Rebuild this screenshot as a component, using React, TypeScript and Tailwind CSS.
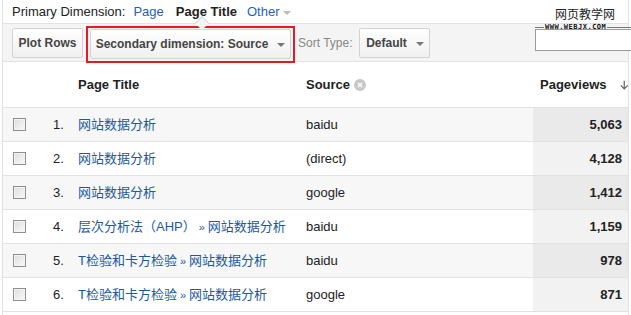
import React from "react";

const rows = [
  { n: "1.", title: [{ t: "网站数据分析" }], src: "baidu", pv: "5,063" },
  { n: "2.", title: [{ t: "网站数据分析" }], src: "(direct)", pv: "4,128" },
  { n: "3.", title: [{ t: "网站数据分析" }], src: "google", pv: "1,412" },
  { n: "4.", title: [{ t: "层次分析法（AHP）" }, { t: "网站数据分析", sep: true }], src: "baidu", pv: "1,159" },
  { n: "5.", title: [{ t: "T检验和卡方检验" }, { t: "网站数据分析", sep: true }], src: "baidu", pv: "978" },
  { n: "6.", title: [{ t: "T检验和卡方检验" }, { t: "网站数据分析", sep: true }], src: "google", pv: "871" },
];

const font = { fontFamily: '"Liberation Sans", Arial, "Noto Sans CJK SC", sans-serif' };

function Caret() {
  return <span className="inline-block w-0 h-0 border-l-[4px] border-r-[4px] border-t-[4px] border-l-transparent border-r-transparent border-t-[#777] ml-[9px] mt-[2px]" />;
}

export default function App() {
  return (
    <div className="w-[631px] h-[315px] bg-white overflow-hidden relative text-[13px] text-[#222]" style={font}>
      <div className="ml-[2px] w-[627px] h-full border-l border-r border-[#e2e2e2]">
        {/* primary dimension */}
        <div className="h-[23px] flex items-center pl-[9px] text-[13px] whitespace-nowrap">
          <span className="text-[#222]">Primary Dimension:</span>
          <span className="ml-[8px] text-[#1f5fbf]">Page</span>
          <span className="ml-[12px] text-[#222] font-bold">Page Title</span>
          <span className="ml-[10px] text-[#1f5fbf]">Other</span>
          <span className="inline-block w-0 h-0 border-l-[4px] border-r-[4px] border-t-[4px] border-l-transparent border-r-transparent border-t-[#bbb] ml-[3px] mt-[2px]" />
        </div>
        {/* toolbar */}
        <div className="relative h-[39px] bg-[#f4f4f4] border-t border-b border-[#e2e2e2] flex items-center whitespace-nowrap overflow-visible">
          <div className="absolute left-[194px] top-[-6px] w-[10px] h-[10px] rotate-45 bg-[#f4f4f4] border-l border-t border-[#d8d8d8]" />
          <div className="shrink-0 ml-[9px] h-[30px] w-[71px] flex items-center justify-center rounded-[2px] border border-[#d3d3d3] bg-gradient-to-b from-white to-[#f0f0f0] text-[12px] font-bold text-[#444]">
            Plot Rows
          </div>
          <div className="shrink-0 ml-[3px] mt-[3px] h-[37px] w-[209px] border-2 border-[#e41b23] flex items-center justify-center">
            <div className="h-[30px] w-[201px] flex items-center justify-center rounded-[2px] border border-[#d3d3d3] bg-gradient-to-b from-white to-[#f0f0f0] text-[12px] font-bold text-[#444]">
              Secondary dimension: Source
              <Caret />
            </div>
          </div>
          <span className="shrink-0 ml-[3px] text-[12px] text-[#888]">Sort Type:</span>
          <div className="shrink-0 ml-[7px] h-[30px] w-[71px] flex items-center justify-center rounded-[2px] border border-[#d3d3d3] bg-gradient-to-b from-white to-[#f0f0f0] text-[12px] font-bold text-[#444]">
            Default
            <Caret />
          </div>
          <div className="shrink-0 ml-[105px] mt-[-6px] h-[22px] w-[100px] border border-[#999] bg-white" />
        </div>
        {/* header */}
        <div className="h-[46px] flex items-center text-[13px] font-bold text-[#222] border-b border-[#e2e2e2]">
          <div className="w-[72px]" />
          <div className="w-[228px] pl-[3px]">Page Title</div>
          <div className="w-[230px] pl-[3px] flex items-center">
            Source
            <span className="ml-[4px] w-[12px] h-[12px] rounded-full bg-[#c8c8c8] flex items-center justify-center">
              <svg width="6" height="6" viewBox="0 0 6 6"><path d="M1 1L5 5M5 1L1 5" stroke="#fff" strokeWidth="1.4" /></svg>
            </span>
          </div>
          <div className="w-[95px] flex items-center pl-[7px]">
            Pageviews
            <svg className="ml-[13px]" width="11" height="12" viewBox="0 0 11 12">
              <path d="M5.5 0.5V10.5M1 6.5L5.5 11L10 6.5" stroke="#666" strokeWidth="1.6" fill="none" />
            </svg>
          </div>
        </div>
        {rows.map((r, i) => (
          <div key={i} className={`h-[34px] flex items-stretch border-b border-[#e2e2e2] ${i % 2 === 0 ? "bg-[#f7f7f7]" : "bg-white"}`}>
            <div className="w-[47px] flex items-center pl-[10px]">
              <span className="w-[13px] h-[13px] border border-[#8f8f8f] bg-gradient-to-br from-[#dcdcdc] to-[#fafafa] shadow-[inset_0_0_0_1px_#f4f4f4]" />
            </div>
            <div className="w-[25px] flex items-center pl-[3px] text-[#222]">{r.n}</div>
            <div className="w-[228px] flex items-center pl-[3px] text-[#1a5a9e] whitespace-nowrap">
              {r.title.map((p, j) => (
                <span key={j}>
                  {p.sep && <span className="text-[11px] mx-[3px]">»</span>}
                  {p.t}
                </span>
              ))}
            </div>
            <div className="w-[230px] flex items-center pl-[3px] text-[#222]">{r.src}</div>
            <div className={`w-[95px] flex items-center justify-end pr-[6px] font-bold text-[#222] ${i % 2 === 0 ? "bg-[#eaeaea]" : "bg-[#f2f2f2]"}`}>{r.pv}</div>
          </div>
        ))}
      </div>
      {/* watermark */}
      <div className="absolute left-[555px] top-[7px] text-[12px] leading-[14px] text-[#222] whitespace-nowrap" style={{ fontFamily: '"Noto Sans CJK SC", sans-serif' }}>网页教学网</div>
      <div className="absolute left-[535px] top-[24px] flex items-center w-[96px] whitespace-nowrap">
        <span className="h-px w-[9px] bg-[#777]" />
        <span className="text-[7px] font-bold leading-[7px] tracking-[0.5px] text-[#111] px-[1px]" style={{ fontFamily: '"DejaVu Sans Mono", monospace' }}>WWW.WEBJX.COM</span>
        <span className="h-px flex-1 bg-[#777]" />
      </div>
    </div>
  );
}
